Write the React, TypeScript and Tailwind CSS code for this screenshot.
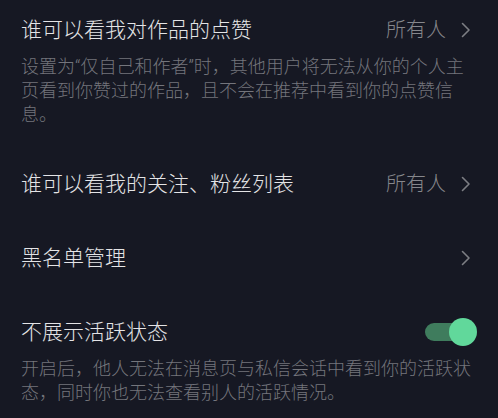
const font = { fontFamily: '"Roboto", "Noto Sans CJK SC", sans-serif' };

function Chevron() {
  return (
    <svg width="12" height="16" viewBox="0 0 12 16" className="ml-[14px] mr-[5px] shrink-0" fill="none">
      <polyline points="2.5,1.5 9,8 2.5,14.5" stroke="#7d7e84" strokeWidth="1.6" strokeLinecap="round" strokeLinejoin="round" />
    </svg>
  );
}

function Toggle() {
  return (
    <div className="relative w-[52px] h-[28px] shrink-0 flex items-center">
      <div className="w-[46px] h-[18px] rounded-full bg-[#3f7c5d]" />
      <div className="absolute right-0 top-0 w-[28px] h-[28px] rounded-full bg-[#61d89b]" />
    </div>
  );
}

export default function App() {
  return (
    <div className="w-[498px] h-[418px] overflow-hidden bg-[#161823] font-light" style={font}>
      {/* 点赞可见 */}
      <div className="px-[21px] pt-[15px] pb-[20px]">
        <div className="flex items-center justify-between h-[30px]">
          <span className="text-[21px] leading-[30px] text-[#e4e4e6]">谁可以看我对作品的点赞</span>
          <div className="flex items-center">
            <span className="text-[20px] leading-[30px] text-[#86878c]">所有人</span>
            <Chevron />
          </div>
        </div>
        <p className="mt-[10px] text-[18px] leading-[24px] text-[#74757c]">
          设置为“仅自己和作者”时，其他用户将无法从你的个人主页看到你赞过的作品，且不会在推荐中看到你的点赞信息。
        </p>
      </div>

      {/* 关注、粉丝 */}
      <div className="px-[21px] py-[22px]">
        <div className="flex items-center justify-between h-[30px]">
          <span className="text-[21px] leading-[30px] text-[#e4e4e6]">谁可以看我的关注、粉丝列表</span>
          <div className="flex items-center">
            <span className="text-[20px] leading-[30px] text-[#86878c]">所有人</span>
            <Chevron />
          </div>
        </div>
      </div>

      {/* 黑名单 */}
      <div className="px-[21px] py-[22px]">
        <div className="flex items-center justify-between h-[30px]">
          <span className="text-[21px] leading-[30px] text-[#e4e4e6]">黑名单管理</span>
          <Chevron />
        </div>
      </div>

      {/* 活跃状态 */}
      <div className="px-[21px] py-[22px]">
        <div className="flex items-center justify-between h-[30px]">
          <span className="text-[21px] leading-[30px] text-[#e4e4e6]">不展示活跃状态</span>
          <Toggle />
        </div>
        <p className="mt-[10px] text-[18px] leading-[24px] text-[#74757c]">
          开启后，他人无法在消息页与私信会话中看到你的活跃状态，同时你也无法查看别人的活跃情况。
        </p>
      </div>
    </div>
  );
}
